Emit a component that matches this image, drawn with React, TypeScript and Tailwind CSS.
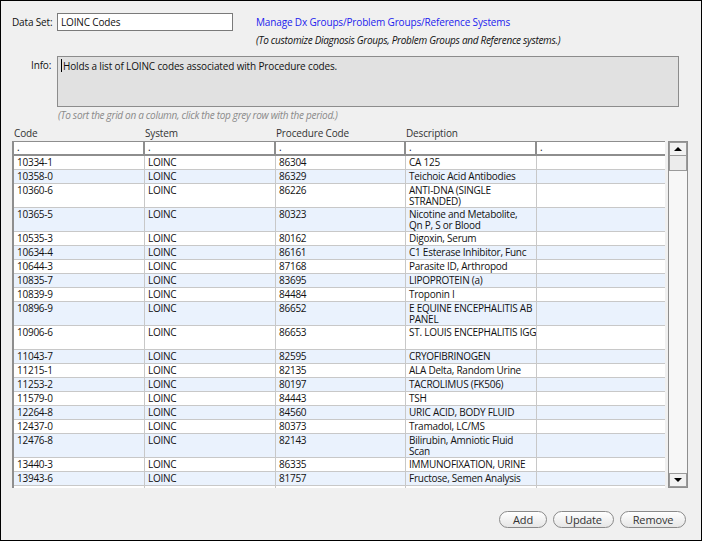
type Row = { code: string; proc: string; desc: string; tall?: boolean }

const rows: Row[] = [
  { code: "10334-1", proc: "86304", desc: "CA 125" },
  { code: "10358-0", proc: "86329", desc: "Teichoic Acid Antibodies" },
  { code: "10360-6", proc: "86226", desc: "ANTI-DNA (SINGLE\nSTRANDED)", tall: true },
  { code: "10365-5", proc: "80323", desc: "Nicotine and Metabolite,\nQn P, S or Blood", tall: true },
  { code: "10535-3", proc: "80162", desc: "Digoxin, Serum" },
  { code: "10634-4", proc: "86161", desc: "C1 Esterase Inhibitor, Func" },
  { code: "10644-3", proc: "87168", desc: "Parasite ID, Arthropod" },
  { code: "10835-7", proc: "83695", desc: "LIPOPROTEIN (a)" },
  { code: "10839-9", proc: "84484", desc: "Troponin I" },
  { code: "10896-9", proc: "86652", desc: "E EQUINE ENCEPHALITIS AB\nPANEL", tall: true },
  { code: "10906-6", proc: "86653", desc: "ST. LOUIS ENCEPHALITIS IGG", tall: true },
  { code: "11043-7", proc: "82595", desc: "CRYOFIBRINOGEN" },
  { code: "11215-1", proc: "82135", desc: "ALA Delta, Random Urine" },
  { code: "11253-2", proc: "80197", desc: "TACROLIMUS (FK506)" },
  { code: "11579-0", proc: "84443", desc: "TSH" },
  { code: "12264-8", proc: "84560", desc: "URIC ACID, BODY FLUID" },
  { code: "12437-0", proc: "80373", desc: "Tramadol, LC/MS" },
  { code: "12476-8", proc: "82143", desc: "Bilirubin, Amniotic Fluid\nScan", tall: true },
  { code: "13440-3", proc: "86335", desc: "IMMUNOFIXATION, URINE" },
  { code: "13943-6", proc: "81757", desc: "Fructose, Semen Analysis" },
  { code: "13955-0", proc: "86790", desc: "Hepatitis Viral Ab" },
]

const cols = "grid grid-cols-[131px_131px_130px_131px_1fr]"

const Cell = ({ children, last }: { children?: React.ReactNode; last?: boolean }) => (
  <div className={`pl-[3px] leading-[11px] pt-px whitespace-pre overflow-hidden tracking-[-0.25px] ${last ? "" : "border-r border-[#c8c8c8]"}`}>
    {children}
  </div>
)

export default function App() {
  return (
    <div
      className="w-[702px] h-[541px] border border-black bg-[#f0f0f0] text-[10px] tracking-[-0.15px] text-[#111] overflow-hidden"
      style={{ fontFamily: '"Open Sans", "Noto Sans", sans-serif' }}
    >
      {/* data set + link */}
      <div className="flex items-center pl-[11px] pt-[12px] whitespace-nowrap">
        <span className="w-[45px]">Data Set:</span>
        <div className="w-[176px] h-[18px] border border-[#7a7a7a] bg-white pl-[3px] leading-[16px]">LOINC Codes</div>
        <span className="ml-[23px] text-[#2222ee]">Manage Dx Groups/Problem Groups/Reference Systems</span>
      </div>
      <div className="pl-[255px] mt-[2px] italic leading-[14px] tracking-[-0.3px] whitespace-nowrap">
        (To customize Diagnosis Groups, Problem Groups and Reference systems.)
      </div>

      {/* info */}
      <div className="flex mt-[9px] pl-[30px]">
        <span className="w-[26px] pt-[2px]">Info:</span>
        <div className="w-[622px] h-[51px] border border-[#8c8c8c] bg-[#e1e1e1] pl-[3px] pt-[2px] flex">
          <span className="w-px h-[13px] bg-black mr-px"></span>
          <span>Holds a list of LOINC codes associated with Procedure codes.</span>
        </div>
      </div>
      <div className="pl-[57px] mt-px italic leading-[14px] text-[#8a8a8a] tracking-[-0.3px] whitespace-nowrap">
        (To sort the grid on a column, click the top grey row with the period.)
      </div>

      {/* column labels */}
      <div className={`${cols} w-[652px] ml-[12px] mt-[4px] leading-[14px] text-[#333]`}>
        <span className="pl-px">Code</span>
        <span className="pl-px">System</span>
        <span className="pl-px">Procedure Code</span>
        <span className="pl-px">Description</span>
        <span></span>
      </div>

      {/* grid + scrollbar */}
      <div className="flex ml-[11px] mt-px h-[347px]">
        <div className="w-[653px] border-l-2 border-t border-[#8e8e8e] bg-white overflow-hidden">
          <div className={`${cols} h-[14px] bg-white border-b-2 border-[#8e8e8e]`}>
            {[0, 1, 2, 3, 4].map((i) => (
              <div key={i} className={`pl-[3px] leading-[10px] ${i < 4 ? "border-r-2 border-[#8e8e8e]" : ""}`}>.</div>
            ))}
          </div>
          {rows.map((r, i) => (
            <div
              key={r.code}
              className={`${cols} ${r.tall ? "h-[24px]" : "h-[14px]"} ${i % 2 ? "bg-[#eaf2fd]" : "bg-white"} border-b border-[#c8c8c8]`}
            >
              <Cell>{r.code}</Cell>
              <Cell>LOINC</Cell>
              <Cell>{r.proc}</Cell>
              <Cell>{r.desc}</Cell>
              <Cell last />
            </div>
          ))}
        </div>
        <div className="w-[20px] ml-[3px] border border-[#8e8e8e] bg-[#f7f7f7] flex flex-col justify-between">
          <div>
            <div className="h-[14px] border border-[#9a9a9a] bg-[#f2f2f2] flex items-center justify-center">
              <span className="w-0 h-0 border-l-[4px] border-r-[4px] border-b-[4px] border-l-transparent border-r-transparent border-b-black"></span>
            </div>
            <div className="h-[15px] border border-[#9a9a9a] border-t-0 bg-[#ececec]"></div>
          </div>
          <div className="h-[14px] border border-[#9a9a9a] bg-[#f2f2f2] flex items-center justify-center">
            <span className="w-0 h-0 border-l-[4px] border-r-[4px] border-t-[4px] border-l-transparent border-r-transparent border-t-black"></span>
          </div>
        </div>
      </div>

      {/* buttons */}
      <div className="flex justify-end gap-[6px] pr-[15px] mt-[23px] text-[11px] text-[#333]">
        <button className="w-[48px] h-[17px] rounded-full border border-[#8a8a8a] bg-gradient-to-b from-white to-[#e6e6e6] leading-[15px]">Add</button>
        <button className="w-[61px] h-[17px] rounded-full border border-[#8a8a8a] bg-gradient-to-b from-white to-[#e6e6e6] leading-[15px]">Update</button>
        <button className="w-[66px] h-[17px] rounded-full border border-[#8a8a8a] bg-gradient-to-b from-white to-[#e6e6e6] leading-[15px]">Remove</button>
      </div>
    </div>
  )
}
